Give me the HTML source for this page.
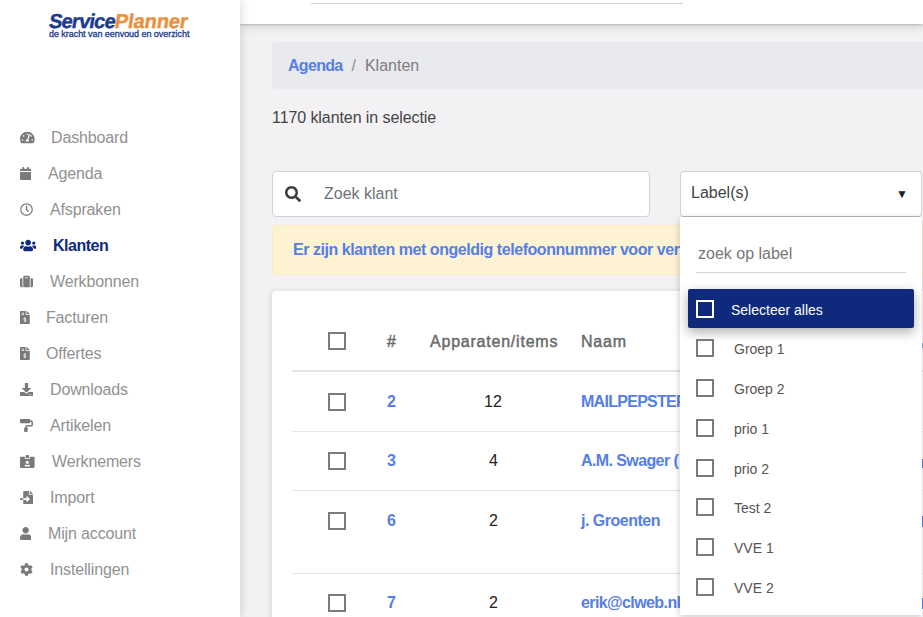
<!DOCTYPE html>
<html><head><meta charset="utf-8">
<style>
*{box-sizing:border-box;margin:0;padding:0}
html,body{width:923px;height:617px;overflow:hidden}
body{font-family:"Liberation Sans",sans-serif;background:#f3f1f4;position:relative;color:#333}
.a{position:absolute;white-space:nowrap}
#side{position:absolute;left:0;top:0;width:240px;height:617px;background:#fff;box-shadow:1px 0 9px rgba(0,0,0,.15);z-index:5}
#hdr{position:absolute;left:240px;top:0;width:683px;height:24px;background:#fff;box-shadow:0 1px 2px rgba(0,0,0,.16),0 3px 10px rgba(0,0,0,.13);z-index:4}
.nv{position:absolute;left:0;width:240px;height:20px;font-size:16px;line-height:20px;color:#919191;letter-spacing:-0.15px}
.nv svg{position:absolute;left:20px;top:3.2px;height:13px;fill:#7a7a7a}
.nv span{position:absolute;top:0}
.bl{color:#557ee6;font-weight:bold}
.cb{position:absolute;width:18px;height:18px;border:2px solid #7b7b7b}
.t16{font-size:16px;line-height:20px}
.hd{color:#6a6a6a;-webkit-text-stroke:0.45px #6a6a6a;letter-spacing:0.78px}
.ln{position:absolute;left:292px;width:640px;height:1px;background:#e3e5e9}
#dd{position:absolute;left:680px;top:217px;width:242px;height:398px;background:#fff;box-shadow:0 2px 7px rgba(0,0,0,.22);z-index:3}
.it{position:absolute;left:0;width:241px;height:20px}
.it .cb{left:16px;top:0}
.it span{position:absolute;left:54px;top:1px;font-size:14px;line-height:18px;color:#555}
</style></head><body>
<div id="side">
  <div class="a" style="left:48px;top:9px;font-size:20px;line-height:24px;font-weight:bold;letter-spacing:-0.4px;transform:skewX(-9deg);transform-origin:0 20px;-webkit-text-stroke:0.4px currentColor"><span style="color:#1c3a8e;letter-spacing:-0.75px">Service</span><span style="color:#e9913b;letter-spacing:-0.1px">Planner</span></div>
  <div class="a" style="left:49px;top:29px;font-size:9px;line-height:10px;color:#1c3a8e;letter-spacing:-0.05px;-webkit-text-stroke:0.3px #1c3a8e">de kracht van eenvoud en overzicht</div>

  <div class="nv" style="top:128px"><svg viewBox="0 0 576 512" width="14.625"><path fill-rule="evenodd" d="M288 32C128.94 32 0 160.94 0 320c0 52.8 14.25 102.26 39.06 144.8 5.61 9.62 16.3 15.2 27.44 15.2h443c11.14 0 21.83-5.58 27.44-15.2C561.750 422.26 576 372.8 576 320c0-159.06-128.94-288-288-288zm0 64c17.67 0 32 14.33 32 32s-14.33 32-32 32-32-14.330-32-32 14.33-32 32-32zM96 384c-17.67 0-32-14.33-32-32s14.33-32 32-32 32 14.33 32 32-14.33 32-32 32zm48-160c-17.67 0-32-14.33-32-32s14.33-32 32-32 32 14.33 32 32-14.33 32-32 32zm246.77-72.41l-61.33 184C343.13 347.33 352 364.54 352 384c0 11.72-3.38 22.55-8.88 32H232.88c-5.5-9.45-8.88-20.28-8.88-32 0-33.94 26.5-61.43 59.9-63.59l61.34-184.01c4.17-12.56 17.73-19.45 30.36-15.17 12.57 4.19 19.35 17.79 15.17 30.36zM432 224c-17.67 0-32-14.33-32-32s14.33-32 32-32 32 14.33 32 32-14.33 32-32 32zM480 384c-17.67 0-32-14.33-32-32s14.33-32 32-32 32 14.33 32 32-14.33 32-32 32z"/></svg><span style="left:51px">Dashboard</span></div>

  <div class="nv" style="top:164px"><svg viewBox="0 0 448 512" width="11.375"><path d="M12 192h424c6.6 0 12 5.4 12 12v260c0 26.5-21.5 48-48 48H48c-26.5 0-48-21.5-48-48V204c0-6.6 5.4-12 12-12zm436-44v-36c0-26.5-21.5-48-48-48h-48V12c0-6.6-5.4-12-12-12h-40c-6.6 0-12 5.4-12 12v52H160V12c0-6.6-5.4-12-12-12h-40c-6.6 0-12 5.4-12 12v52H48C21.5 64 0 85.5 0 112v36c0 6.6 5.4 12 12 12h424c6.6 0 12-5.4 12-12z"/></svg><span style="left:48px">Agenda</span></div>

  <div class="nv" style="top:200px"><svg viewBox="0 0 512 512" width="13.000"><path fill-rule="evenodd" d="M256 8C119 8 8 119 8 256s111 248 248 248 248-111 248-248S393 8 256 8zm0 448c-110.5 0-200-89.5-200-200S145.5 56 256 56s200 89.5 200 200-89.5 200-200 200zm61.8-104.4l-84.9-61.7c-3.1-2.3-4.9-5.9-4.9-9.7V116c0-6.6 5.4-12 12-12h32c6.6 0 12 5.4 12 12v141.7l66.8 48.6c5.4 3.9 6.5 11.4 2.6 16.8L334.6 349c-3.9 5.3-11.4 6.5-16.8 2.6z"/></svg><span style="left:50px">Afspraken</span></div>

  <div class="nv" style="top:236px;color:#0f2a80;font-weight:bold"><svg viewBox="0 0 640 512" width="16.250" style="fill:#0f2a80"><path d="M96 224c35.3 0 64-28.7 64-64s-28.7-64-64-64-64 28.7-64 64 28.7 64 64 64zm448 0c35.3 0 64-28.7 64-64s-28.7-64-64-64-64 28.7-64 64 28.7 64 64 64zm32 32h-64c-17.6 0-33.5 7.1-45.1 18.6 40.3 22.1 68.9 62 75.1 109.4h66c17.7 0 32-14.3 32-32v-32c0-35.300-28.700-64-64-64zm-256 0c61.9 0 112-50.1 112-112S381.9 32 320 32 208 82.1 208 144s50.1 112 112 112zm76.8 32h-8.3c-20.8 10-43.9 16-68.5 16s-47.6-6-68.5-16h-8.3C179.6 288 128 339.6 128 403.2V432c0 26.5 21.5 48 48 48h288c26.5 0 48-21.5 48-48v-28.8c0-63.6-51.6-115.2-115.2-115.2zm-223.7-13.4C161.5 263.1 145.6 256 128 256H64c-35.3 0-64 28.7-64 64v32c0 17.7 14.3 32 32 32h65.9c6.3-47.4 34.9-87.3 75.2-109.4z"/></svg><span style="left:53px;letter-spacing:-0.5px">Klanten</span></div>

  <div class="nv" style="top:272px"><svg viewBox="0 0 512 512" width="13.000"><path d="M128 480h256V80c0-26.5-21.5-48-48-48H176c-26.5 0-48 21.5-48 48v400zM192 96h128v32H192V96zm320 80v256c0 26.5-21.5 48-48 48h-48V128h48c26.5 0 48 21.5 48 48zM96 480H48c-26.5 0-48-21.5-48-48V176c0-26.5 21.5-48 48-48h48v352z"/></svg><span style="left:50px">Werkbonnen</span></div>

  <div class="nv" style="top:308px"><svg viewBox="0 0 384 512" width="9.750"><path d="M24 0H224V136c0 13.2 10.8 24 24 24H384V488c0 13.3-10.7 24-24 24H24C10.7 512 0 501.3 0 488V24C0 10.7 10.7 0 24 0z"/><path d="M256 0h6.1c6.4 0 12.5 2.5 17 7L377 105c4.5 4.5 7 10.6 7 16.9V128H256z"/><rect x="64" y="64" width="96" height="32" rx="8" fill="#fff"/><rect x="64" y="128" width="96" height="32" rx="8" fill="#fff"/><path d="M236 290H172a26 26 0 0 0 0 52h40a26 26 0 0 1 0 52H148M192 250v40M192 394v44" fill="none" stroke="#fff" stroke-width="34"/></svg><span style="left:46px">Facturen</span></div>

  <div class="nv" style="top:344px"><svg viewBox="0 0 384 512" width="9.750"><path d="M24 0H224V136c0 13.2 10.8 24 24 24H384V488c0 13.3-10.7 24-24 24H24C10.7 512 0 501.3 0 488V24C0 10.7 10.7 0 24 0z"/><path d="M256 0h6.1c6.4 0 12.5 2.5 17 7L377 105c4.5 4.5 7 10.6 7 16.9V128H256z"/><rect x="64" y="64" width="96" height="32" rx="8" fill="#fff"/><rect x="64" y="128" width="96" height="32" rx="8" fill="#fff"/><path d="M236 290H172a26 26 0 0 0 0 52h40a26 26 0 0 1 0 52H148M192 250v40M192 394v44" fill="none" stroke="#fff" stroke-width="34"/></svg><span style="left:46px">Offertes</span></div>

  <div class="nv" style="top:380px"><svg viewBox="0 0 512 512" width="13.000"><path fill-rule="evenodd" d="M216 0h80c13.3 0 24 10.7 24 24v168h87.7c17.8 0 26.7 21.5 14.1 34.1L269.7 378.3c-7.5 7.5-19.8 7.5-27.3 0L90.1 226.1c-12.6-12.6-3.7-34.1 14.1-34.1H192V24c0-13.3 10.7-24 24-24zM512 376v112c0 13.3-10.7 24-24 24H24c-13.3 0-24-10.7-24-24V376c0-13.3 10.7-24 24-24h146.7l49 49c20.1 20.1 52.5 20.1 72.6 0l49-49H488c13.3 0 24 10.7 24 24zM388 464c0-11-9-20-20-20s-20 9-20 20 9 20 20 20 20-9 20-20zm64 0c0-11-9-20-20-20s-20 9-20 20 9 20 20 20 20-9 20-20z"/></svg><span style="left:50px">Downloads</span></div>

  <div class="nv" style="top:416px"><svg viewBox="0 0 512 512" width="13.000"><rect x="0" y="0" width="400" height="168" rx="32"/><path d="M400 84H432Q480 84 480 132V236Q480 268 448 268H272Q240 268 240 300V350" fill="none" stroke="#7a7a7a" stroke-width="60"/><rect x="160" y="336" width="144" height="176" rx="40"/></svg><span style="left:50px">Artikelen</span></div>

  <div class="nv" style="top:452px"><svg viewBox="0 0 576 512" width="14.625"><path fill-rule="evenodd" d="M528 64H384v96H192V64H48C21.5 64 0 85.5 0 112v352c0 26.5 21.5 48 48 48h480c26.5 0 48-21.5 48-48V112c0-26.5-21.5-48-48-48zM288 224c35.3 0 64 28.7 64 64s-28.7 64-64 64-64-28.7-64-64 28.7-64 64-64zm93.3 224H194.7c-10.4 0-18.8-10-15.6-19.8 8.3-25.6 32.4-44.2 60.7-44.2h8.2c12.3 5.1 25.7 8 39.8 8s27.6-2.9 39.8-8h8.2c28.4 0 52.4 18.5 60.7 44.2 3.2 9.8-5.2 19.8-15.6 19.8z"/><path d="M352 32c0-17.7-14.3-32-32-32h-64c-17.7 0-32 14.3-32 32v96h128V32z"/></svg><span style="left:52px">Werknemers</span></div>

  <div class="nv" style="top:488px"><svg viewBox="0 0 512 512" width="13.000"><path d="M16 288c-8.8 0-16 7.2-16 16v32c0 8.8 7.2 16 16 16h112v-64zm489-183L407.1 7c-4.5-4.5-10.6-7-17-7H384v128h128v-6.1c0-6.4-2.5-12.5-7-16.9zm-153 31V0H152c-13.3 0-24 10.7-24 24v264h128v-65.2c0-14.3 17.3-21.4 27.4-11.3L379 308c6.6 6.7 6.6 17.4 0 24l-95.7 96.4c-10.1 10.1-27.4 3-27.4-11.3V352H128v136c0 13.3 10.7 24 24 24h336c13.3 0 24-10.7 24-24V160H376c-13.2 0-24-10.8-24-24z"/></svg><span style="left:50px">Import</span></div>

  <div class="nv" style="top:524px"><svg viewBox="0 0 448 512" width="11.375"><path d="M224 256c70.7 0 128-57.3 128-128S294.7 0 224 0 96 57.3 96 128s57.3 128 128 128zm89.6 32h-16.7c-22.2 10.2-46.9 16-72.9 16s-50.6-5.8-72.9-16h-16.7C60.2 288 0 348.2 0 422.4V464c0 26.5 21.5 48 48 48h352c26.5 0 48-21.5 48-48v-41.6c0-74.2-60.2-134.4-134.4-134.4z"/></svg><span style="left:48px">Mijn account</span></div>

  <div class="nv" style="top:560px"><svg viewBox="0 0 512 512" width="13.000"><path fill-rule="evenodd" d="M487.4 315.7l-42.6-24.6c4.3-23.2 4.3-47 0-70.2l42.6-24.6c4.9-2.8 7.1-8.6 5.5-14-11.1-35.6-30-67.8-54.7-94.6-3.8-4.1-10-5.1-14.8-2.3L380.8 110c-17.9-15.4-38.5-27.3-60.8-35.1V25.8c0-5.6-3.9-10.5-9.4-11.7-36.7-8.2-74.3-7.8-109.2 0-5.5 1.2-9.4 6.1-9.4 11.7V75c-22.2 7.9-42.8 19.8-60.8 35.1L88.7 85.5c-4.9-2.8-11-1.9-14.8 2.3-24.7 26.7-43.6 58.9-54.7 94.6-1.7 5.4.6 11.2 5.5 14L67.3 221c-4.3 23.2-4.3 47 0 70.2l-42.6 24.6c-4.9 2.8-7.1 8.6-5.5 14 11.1 35.6 30 67.8 54.7 94.6 3.8 4.1 10 5.1 14.8 2.3l42.6-24.6c17.9 15.4 38.5 27.3 60.8 35.1v49.2c0 5.6 3.9 10.5 9.4 11.7 36.7 8.2 74.3 7.8 109.2 0 5.5-1.2 9.4-6.1 9.4-11.7v-49.2c22.2-7.9 42.8-19.8 60.8-35.1l42.6 24.6c4.9 2.8 11 1.9 14.8-2.3 24.7-26.7 43.6-58.9 54.7-94.6 1.5-5.5-.7-11.3-5.6-14.1zM256 336c-44.1 0-80-35.9-80-80s35.9-80 80-80 80 35.9 80 80-35.9 80-80 80z"/></svg><span style="left:50px">Instellingen</span></div>
</div>

<div id="hdr">
  <div class="a" style="left:71px;top:3px;width:372px;height:1px;background:#cdd1d8"></div>
</div>

<!-- breadcrumb -->
<div class="a" style="left:272px;top:42px;width:660px;height:47px;background:#e9eaee;border-radius:4px"></div>
<div class="a t16" style="left:288px;top:56px"><b class="bl" style="letter-spacing:-0.7px">Agenda</b><span style="color:#8d8d8d;margin:0 9px">/</span><span style="color:#7d7d7d">Klanten</span></div>
<div class="a t16" style="left:272px;top:108px;color:#444;letter-spacing:-0.08px">1170 klanten in selectie</div>

<!-- search -->
<div class="a" style="left:272px;top:171px;width:378px;height:46px;background:#fff;border:1px solid #cfd3d8;border-radius:4px"></div>
<svg class="a" style="left:285px;top:186px" width="16" height="16" viewBox="0 0 512 512"><path fill="#3d3d3d" d="M505 442.7L405.3 343c-4.5-4.5-10.6-7-17-7H372c27.6-35.3 44-79.7 44-128C416 93.1 322.9 0 208 0S0 93.1 0 208s93.1 208 208 208c48.3 0 92.7-16.4 128-44v16.3c0 6.4 2.5 12.5 7 17l99.7 99.7c9.4 9.4 24.6 9.4 33.9 0l28.3-28.3c9.4-9.4 9.4-24.6.1-34zM208 336c-70.7 0-128-57.2-128-128 0-70.7 57.2-128 128-128 70.7 0 128 57.2 128 128 0 70.7-57.2 128-128 128z"/></svg>
<div class="a t16" style="left:324px;top:184px;color:#6f7479">Zoek klant</div>

<!-- label select -->
<div class="a" style="left:680px;top:171px;width:242px;height:46px;background:#fff;border:1px solid #cfd3d8;border-bottom-color:#b9b9bd;border-radius:4px;z-index:3"></div>
<div class="a t16" style="left:691px;top:183px;color:#444;z-index:4">Label(s)</div>
<div class="a" style="left:896px;top:187px;font-size:12px;line-height:14px;color:#222;z-index:4">&#9660;</div>

<!-- alert -->
<div class="a" style="left:272px;top:225px;width:660px;height:50px;background:#fdf3d3;border:1px solid #fbecc0;border-radius:4px"></div>
<div class="a t16 bl" style="left:293px;top:240px;letter-spacing:-0.45px">Er zijn klanten met ongeldig telefoonnummer voor verschillende</div>

<!-- table card -->
<div class="a" style="left:272px;top:291px;width:660px;height:340px;background:#fff;border-radius:4px;box-shadow:0 1px 6px rgba(0,0,0,.15)"></div>
<div class="cb" style="left:328px;top:332px"></div>
<div class="a t16 hd" style="left:387px;top:332px">#</div>
<div class="a t16 hd" style="left:430px;top:332px">Apparaten/items</div>
<div class="a t16 hd" style="left:581px;top:332px">Naam</div>
<div class="ln" style="top:370px;height:2px"></div>

<div class="cb" style="left:328px;top:393px"></div>
<div class="a t16 bl" style="left:387px;top:392px">2</div>
<div class="a t16" style="left:484px;top:392px;color:#222">12</div>
<div class="a t16 bl" style="left:581px;top:392px;letter-spacing:-0.72px">MAILPEPSTER</div>
<div class="ln" style="top:431px"></div>

<div class="cb" style="left:328px;top:452px"></div>
<div class="a t16 bl" style="left:387px;top:451px">3</div>
<div class="a t16" style="left:489px;top:451px;color:#222">4</div>
<div class="a t16 bl" style="left:581px;top:451px;letter-spacing:-0.6px">A.M. Swager (</div>
<div class="ln" style="top:490px"></div>

<div class="cb" style="left:328px;top:512px"></div>
<div class="a t16 bl" style="left:387px;top:511px">6</div>
<div class="a t16" style="left:489px;top:511px;color:#222">2</div>
<div class="a t16 bl" style="left:581px;top:511px;letter-spacing:-0.5px">j. Groenten</div>
<div class="ln" style="top:573px"></div>

<div class="cb" style="left:328px;top:594px"></div>
<div class="a t16 bl" style="left:387px;top:593px">7</div>
<div class="a t16" style="left:489px;top:593px;color:#222">2</div>
<div class="a t16 bl" style="left:581px;top:593px;letter-spacing:-0.6px">erik@clweb.nl</div>

<div class="a" style="left:921px;top:343px;width:2px;height:5px;background:#8fb0e8"></div>
<div class="a" style="left:921px;top:459px;width:2px;height:9px;background:#6f79d8"></div>
<div class="a" style="left:921px;top:516px;width:2px;height:11px;background:#5b82e4"></div>
<div class="a" style="left:921px;top:598px;width:2px;height:11px;background:#5b82e4"></div>
<!-- dropdown -->
<div id="dd">
  <div class="a" style="left:18px;top:27px;font-size:16px;line-height:20px;color:#777">zoek op label</div>
  <div class="a" style="left:16px;top:55px;width:210px;height:1px;background:#cfd5de"></div>
  <div class="a" style="left:8px;top:72px;width:226px;height:39px;background:#0f2a7c;border-radius:2px;box-shadow:0 4px 12px rgba(0,0,0,.33)"></div>
  <div class="cb" style="left:16px;top:83px;border-color:#fff"></div>
  <div class="a" style="left:51px;top:84px;font-size:14px;line-height:18px;color:#fff">Selecteer alles</div>
  <div class="it" style="top:122px"><div class="cb"></div><span>Groep 1</span></div>
  <div class="it" style="top:162px"><div class="cb"></div><span>Groep 2</span></div>
  <div class="it" style="top:202px"><div class="cb"></div><span>prio 1</span></div>
  <div class="it" style="top:242px"><div class="cb"></div><span>prio 2</span></div>
  <div class="it" style="top:281px"><div class="cb"></div><span>Test 2</span></div>
  <div class="it" style="top:321px"><div class="cb"></div><span>VVE 1</span></div>
  <div class="it" style="top:361px"><div class="cb"></div><span>VVE 2</span></div>
</div>
</body></html>
